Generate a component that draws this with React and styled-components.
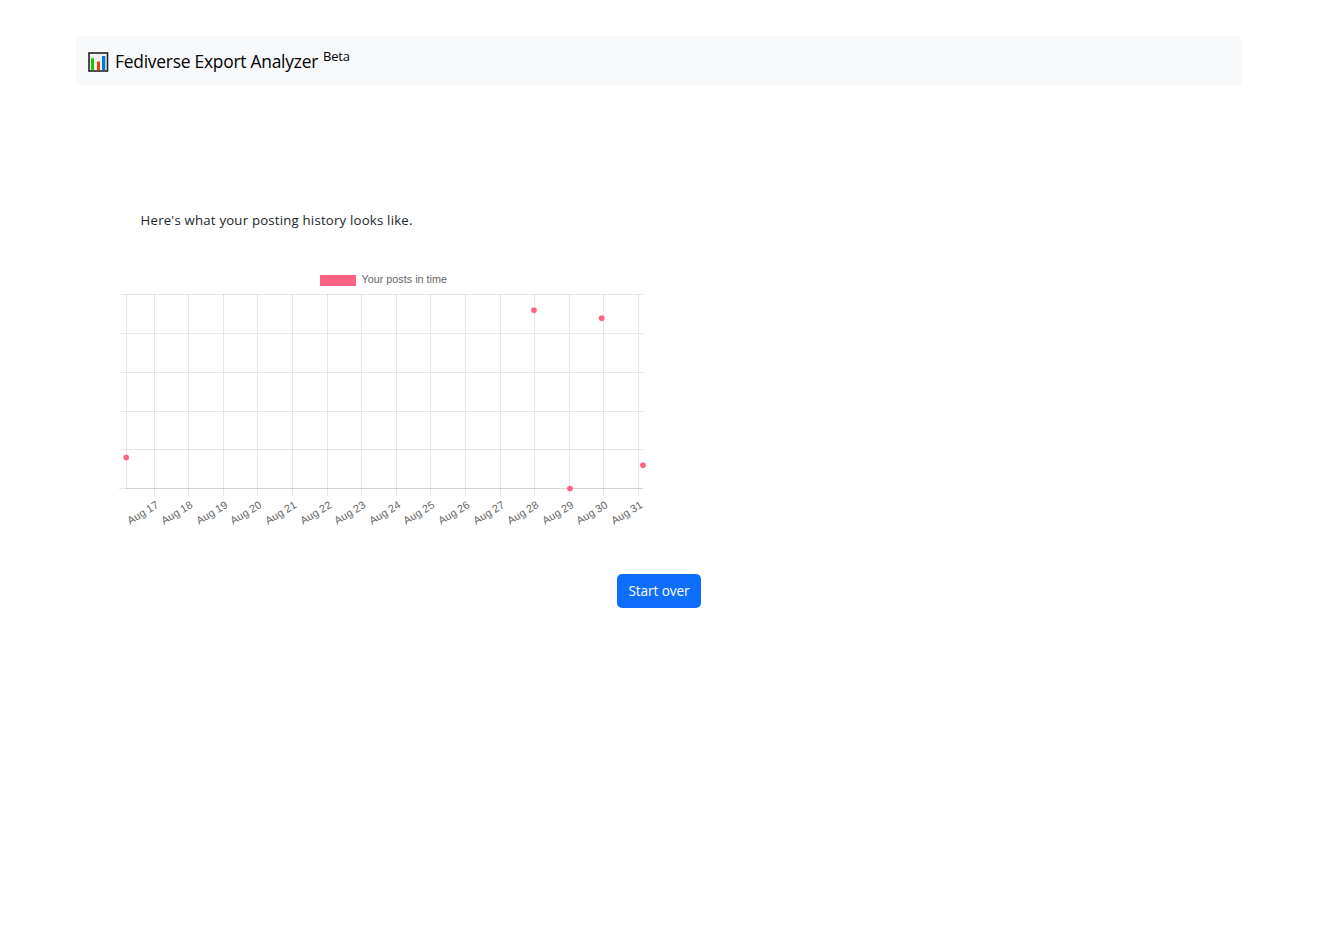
import React from "react";
import styled, { createGlobalStyle } from "styled-components";

const GlobalStyle = createGlobalStyle`
  * { box-sizing: border-box; }
  body { margin: 0; background: #fff; color: #000; font-family: "Open Sans", "Noto Sans", sans-serif; }
`;

const Page = styled.div`
  width: 1166px;
  margin-left: 76px;
  padding-top: 36px;
`;

const Navbar = styled.nav`
  display: flex;
  align-items: center;
  height: 50px;
  padding: 0 12px;
  border-radius: 6px;
  background: #f8f9fa;
`;

const Logo = styled.svg`
  display: block;
  width: 21px;
  height: 20px;
  margin: 1px 6px 0 0;
`;

const Brand = styled.span`
  font-size: 17.4px;
  line-height: 27px;
  letter-spacing: -0.24px;
  white-space: nowrap;
`;

const BetaTag = styled.span`
  margin: -11px 0 0 5px;
  font-size: 13px;
  line-height: 18px;
  letter-spacing: -0.2px;
`;

const Main = styled.main`
  display: flex;
  flex-direction: column;
`;

const Intro = styled.p`
  margin: 123px 0 0 64.6px;
  font-size: 13.2px;
  line-height: 22px;
  letter-spacing: 0.21px;
  color: #212529;
  white-space: nowrap;
`;

const Chart = styled.svg`
  display: block;
  width: 550px;
  height: 270px;
  margin: 34px 0 0 34px;
  font-family: "Liberation Sans", Arial, sans-serif;
`;

const StartButton = styled.button`
  align-self: center;
  width: 84px;
  height: 34px;
  margin-top: 39px;
  padding: 0 0 1px;
  border: 0;
  border-radius: 5px;
  background: #0d6efd;
  color: #fff;
  font: 13.6px/20px "Open Sans", "Noto Sans", sans-serif;
  letter-spacing: -0.1px;
  white-space: nowrap;
`;

const days = [
  154, 188, 223, 257, 292, 327, 361, 396, 430, 465, 500, 534, 569, 603, 638,
].map((x, i) => ({ x, label: `Aug ${17 + i}` }));
const levels = [294, 333, 372, 411, 449];
const posts = [[126.2, 457.5], [534, 310.3], [601.7, 318.2], [570, 488.6], [643, 465.3]];

function PostsChart() {
  return (
    <Chart viewBox="110 265 550 270">
      <rect x="320" y="275" width="36" height="11" fill="#ff6384" />
      <text x="361.5" y="283" fontSize="10.8" fill="#666" textLength="85.5">Your posts in time</text>
      <g fill="#000" fillOpacity="0.09">
        {levels.map((y) => <rect key={y} x="119" y={y} width="524" height="1" />)}
        <rect x="119" y="488" width="7" height="1" />
        <rect x="126" y="294" width="1" height="195" />
        {days.map(({ x }) => <rect key={x} x={x} y="294" width="1" height="202" />)}
      </g>
      <rect x="126" y="488" width="517" height="1" fill="#000" fillOpacity="0.17" />
      <g fontSize="10.8" fill="#666" textAnchor="end">
        {days.map(({ x, label }) => (
          <text key={x} transform={`translate(${x + 5.4} 507) rotate(-31)`}>{label}</text>
        ))}
      </g>
      <g fill="#ff6384" stroke="#ff6384" strokeWidth="0.4">
        {posts.map(([x, y]) => <circle key={x} cx={x} cy={y} r="2.7" />)}
      </g>
    </Chart>
  );
}

function BarLogo() {
  return (
    <Logo viewBox="0 0 21 20" aria-hidden="true">
      <rect x="1" y="1" width="18.5" height="18" fill="#f3f3f3" stroke="#222" strokeWidth="1.6" />
      <path d="M5 2v16M10 2v16M15 2v16M2 6h17M2 11h17" stroke="#e2e2e2" strokeWidth=".6" />
      <rect x="3" y="6.3" width="3" height="11.9" fill="#16c60c" />
      <rect x="9" y="9.5" width="3" height="8.7" fill="#f03a17" />
      <rect x="14" y="4" width="3.3" height="14.2" fill="#0078d7" />
    </Logo>
  );
}

export default function App() {
  return (
    <>
      <GlobalStyle />
      <Page>
        <Navbar>
          <BarLogo />
          <Brand>Fediverse Export Analyzer</Brand>
          <BetaTag>Beta</BetaTag>
        </Navbar>
        <Main>
          <Intro>Here's what your posting history looks like.</Intro>
          <PostsChart />
          <StartButton type="button">Start over</StartButton>
        </Main>
      </Page>
    </>
  );
}
